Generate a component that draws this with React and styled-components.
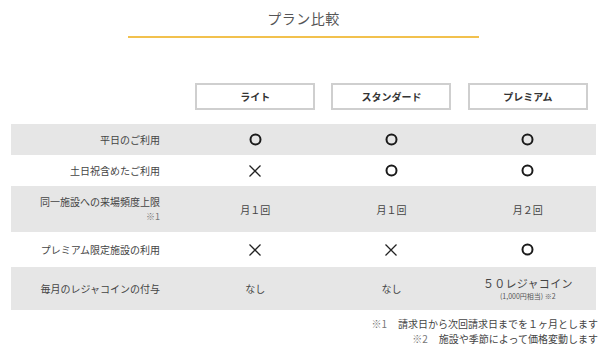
import React from "react";
import styled, { createGlobalStyle } from "styled-components";

const GlobalStyle = createGlobalStyle`
  html, body {
    margin: 0;
    padding: 0;
    background: #fff;
  }
  body {
    font-family: "Noto Sans CJK JP", "Noto Sans", "Liberation Sans", sans-serif;
    color: #444;
  }
`;

const plans = ["ライト", "スタンダード", "プレミアム"];

const rows = [
  { label: "平日のご利用", cells: ["o", "o", "o"] },
  { label: "土日祝含めたご利用", cells: ["x", "o", "o"] },
  { label: "同一施設への来場頻度上限", note: "※1", cells: ["月１回", "月１回", "月２回"] },
  { label: "プレミアム限定施設の利用", cells: ["x", "x", "o"] },
  { label: "毎月のレジャコインの付与", cells: ["なし", "なし", "coin"] },
];

const Circle = () => (
  <svg width="13" height="13" viewBox="0 0 13 13">
    <circle cx="6.5" cy="6.5" r="5" fill="none" stroke="#1a1a1a" strokeWidth="2" />
  </svg>
);

const Cross = () => (
  <svg width="14" height="14" viewBox="0 0 14 14">
    <path d="M1.5 1.5 L12.5 12.5 M12.5 1.5 L1.5 12.5" stroke="#222" strokeWidth="1.3" fill="none" />
  </svg>
);

const renderCell = (v) => {
  if (v === "o") return <Circle />;
  if (v === "x") return <Cross />;
  if (v === "coin")
    return (
      <Stack>
        <Coin>５０レジャコイン</Coin>
        <Small>(1,000円相当) ※2</Small>
      </Stack>
    );
  return v;
};

export default function App() {
  return (
    <>
      <GlobalStyle />
      <Page>
        <TitleBlock>
          <Title>プラン比較</Title>
          <Underline />
        </TitleBlock>
        <Grid>
          <HeadSpacer />
          {plans.map((p) => (
            <HeadCell key={p}>
              <PlanBox>{p}</PlanBox>
            </HeadCell>
          ))}
        </Grid>
        <Table>
          {rows.map((r, i) => (
            <Row key={r.label} $shade={i % 2 === 0} $pad={i === 3 ? 10 : 8}>
              <Label>
                {r.label}
                {r.note && <Note>{r.note}</Note>}
              </Label>
              {r.cells.map((c, j) => (
                <Cell key={j}>{renderCell(c)}</Cell>
              ))}
            </Row>
          ))}
        </Table>
        <Footnotes>
          <FootLine>
            <Mark>※1</Mark>請求日から次回請求日までを１ヶ月とします
          </FootLine>
          <FootLine>
            <Mark>※2</Mark>施設や季節によって価格変動します
          </FootLine>
        </Footnotes>
      </Page>
    </>
  );
}

const Page = styled.div`
  width: 585px;
  margin-left: 11px;
`;

const TitleBlock = styled.div`
  display: flex;
  flex-direction: column;
  align-items: center;
  padding-top: 8px;
`;

const Title = styled.h1`
  margin: 0;
  font-size: 14px;
  font-weight: 400;
  line-height: 20px;
  color: #555;
  letter-spacing: 0.5px;
`;

const Underline = styled.div`
  width: 351px;
  height: 2px;
  margin-top: 8px;
  background: #f2c14e;
`;

const Grid = styled.div`
  display: grid;
  grid-template-columns: 176px repeat(3, 1fr);
  margin-top: 45px;
`;

const HeadSpacer = styled.div``;

const HeadCell = styled.div`
  display: flex;
  justify-content: center;
`;

const PlanBox = styled.div`
  box-sizing: border-box;
  width: 120px;
  height: 27px;
  border: 2px solid #cfcfcf;
  background: #fff;
  display: flex;
  align-items: center;
  justify-content: center;
  font-size: 10px;
  font-weight: 700;
  color: #333;
`;

const Table = styled.div`
  margin-top: 14px;
`;

const Row = styled.div`
  display: grid;
  grid-template-columns: 176px repeat(3, 1fr);
  align-items: center;
  padding: ${(p) => p.$pad}px 0;
  background: ${(p) => (p.$shade ? "#e6e6e6" : "#fff")};
`;

const Label = styled.div`
  display: flex;
  flex-direction: column;
  align-items: flex-end;
  padding-right: 27px;
  font-size: 10px;
  line-height: 15px;
  color: #444;
`;

const Note = styled.span`
  font-size: 9px;
  line-height: 15px;
  color: #777;
`;

const Cell = styled.div`
  display: flex;
  justify-content: center;
  align-items: center;
  min-height: 15px;
  font-size: 10px;
  line-height: 15px;
  color: #444;
`;

const Stack = styled.div`
  display: flex;
  flex-direction: column;
  align-items: center;
`;

const Coin = styled.span`
  font-size: 11px;
  line-height: 16px;
  letter-spacing: 0.3px;
  color: #444;
`;

const Small = styled.span`
  font-size: 7px;
  line-height: 11px;
  color: #555;
`;

const Footnotes = styled.div`
  display: flex;
  flex-direction: column;
  align-items: flex-end;
  margin-top: 6px;
  margin-right: -2px;
`;

const FootLine = styled.div`
  font-size: 10px;
  line-height: 15px;
  color: #444;
`;

const Mark = styled.span`
  color: #777;
  margin-right: 11px;
`;
